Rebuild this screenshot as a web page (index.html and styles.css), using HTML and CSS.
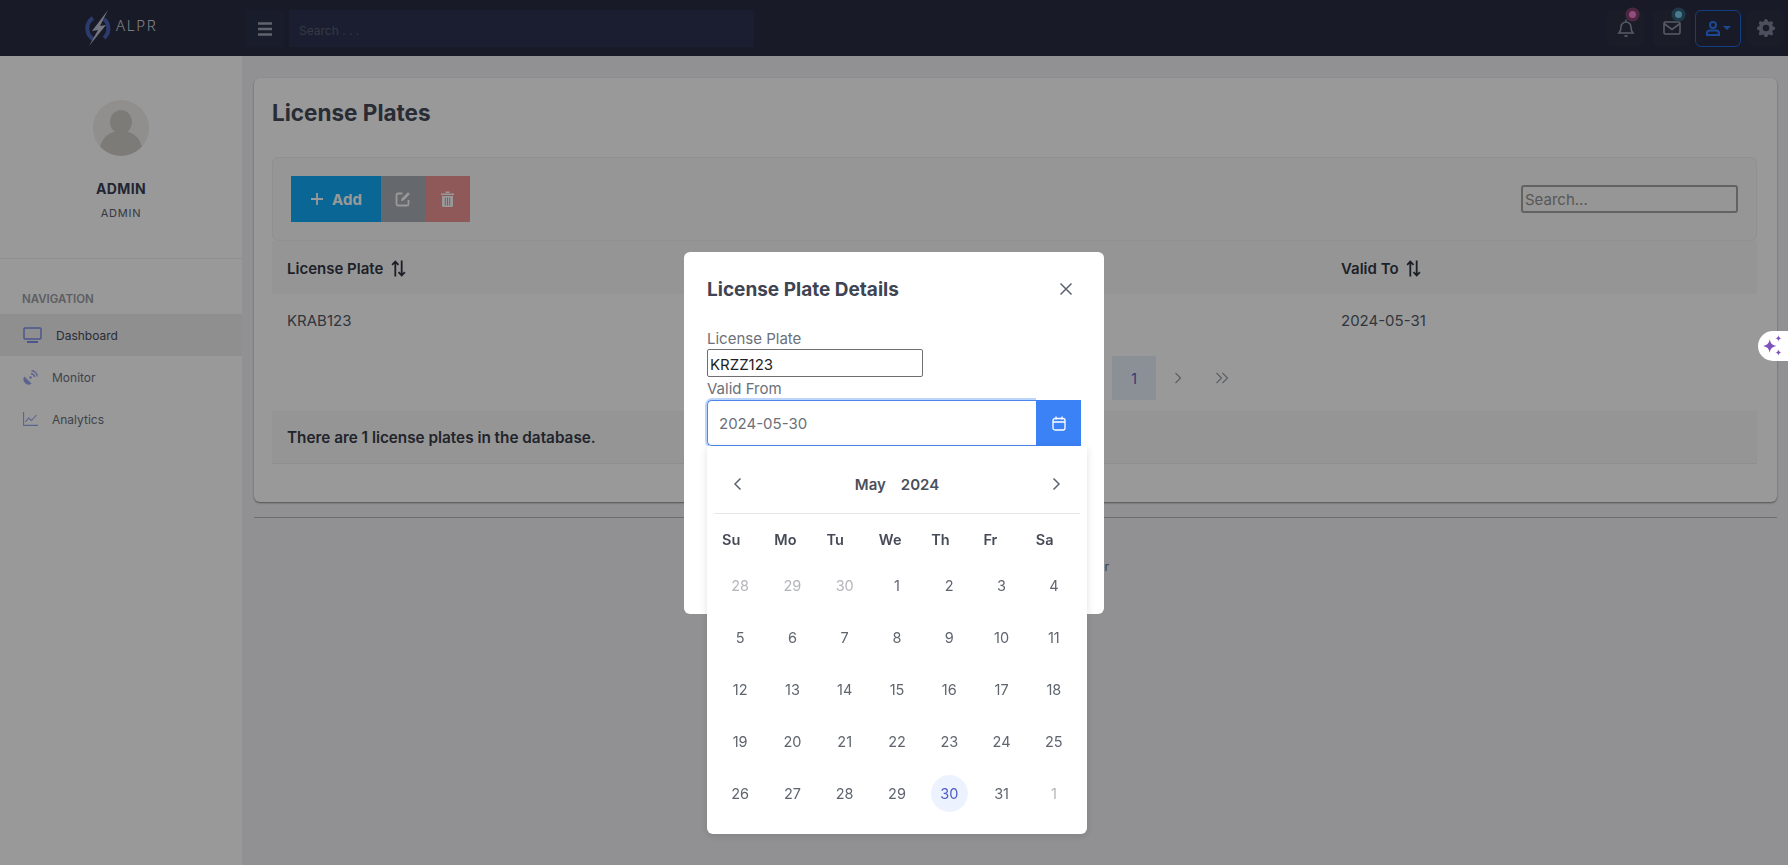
FILE: index.html
```html
<!DOCTYPE html>
<html lang="en">
<head>
  <meta charset="UTF-8">
  <title>License Plates</title>
  <link rel="stylesheet" href="styles.css">
</head>
<body>
  <header class="topbar">
    <div class="brand">
      <svg class="brand-logo" width="28" height="36" viewBox="0 0 28 36">
        <path d="M8 8 A12.5 12.5 0 0 0 8 29" fill="none" stroke="#4a62b8" stroke-width="4"/>
        <path d="M19 9 A12.5 12.5 0 0 1 19 28" fill="none" stroke="#4a62b8" stroke-width="4"/>
        <path d="M23 0 L7 21 L13 20 L4 36 L21 15 L15 16 Z" fill="#c0c4d6"/>
      </svg>
      <span class="brand-name">ALPR</span>
    </div>
    <button class="menu-btn">
      <svg width="16" height="14" viewBox="0 0 16 14"><path d="M1 1.500h14M1 7h14M1 12.500h14" stroke="#a0a5b4" stroke-width="2.400"/></svg>
    </button>
    <div class="top-search">Search . . .</div>
    <div class="top-actions">
      <button class="top-btn bell-btn">
        <svg width="18" height="20" viewBox="0 0 18 20" fill="none" stroke="#9498a8" stroke-width="1.500"><path d="M2 15c1.500-1.500 2-3 2-6a5 5 0 0 1 10 0c0 3 .5 4.500 2 6z"/><path d="M7.500 18h3" stroke-width="1.800"/><path d="M9 1.500v2"/></svg>
        <span class="dot dot-pink"></span>
      </button>
      <button class="top-btn mail-btn">
        <svg width="18" height="14" viewBox="0 0 18 14" fill="none" stroke="#9498a8" stroke-width="1.600"><rect x="1" y="1" width="16" height="12" rx="1.500"/><path d="M1 2.500l8 6 8-6"/></svg>
        <span class="dot dot-teal"></span>
      </button>
      <button class="user-btn">
        <svg width="14" height="15" viewBox="0 0 14 15" fill="none" stroke="#2f7bf5" stroke-width="2"><circle cx="7" cy="4" r="3"/><path d="M1 14v-1.500c0-2 1.500-3 3-3h6c1.500 0 3 1 3 3V14z"/></svg>
        <span class="caret"></span>
      </button>
      <button class="top-btn gear-btn">
        <svg width="18" height="18" viewBox="0 0 16 16" fill="#80859a"><path d="M9.400 1.100c-.4-1.500-2.500-1.500-2.900 0l-.1.300a1.500 1.500 0 0 1-2.200.9l-.3-.1c-1.300-.8-2.800.7-2 2l.1.300a1.500 1.500 0 0 1-.9 2.200l-.3.100c-1.500.4-1.500 2.500 0 2.900l.3.100a1.500 1.500 0 0 1 .9 2.200l-.1.300c-.8 1.300.7 2.800 2 2l.3-.1a1.500 1.500 0 0 1 2.200.9l.1.300c.4 1.500 2.500 1.500 2.900 0l.1-.3a1.500 1.500 0 0 1 2.200-.9l.3.1c1.300.8 2.800-.7 2-2l-.1-.3a1.500 1.500 0 0 1 .9-2.200l.3-.1c1.500-.4 1.500-2.500 0-2.900l-.3-.1a1.500 1.500 0 0 1-.9-2.200l.1-.3c.8-1.300-.7-2.800-2-2l-.3.1a1.500 1.500 0 0 1-2.200-.9zM8 10.900a2.900 2.900 0 1 1 0-5.800 2.900 2.900 0 0 1 0 5.800z"/></svg>
      </button>
    </div>
  </header>

  <div class="layout">
    <aside class="sidebar">
      <div class="profile">
        <div class="avatar">
          <svg width="56" height="56" viewBox="0 0 56 56"><ellipse cx="28" cy="22" rx="11" ry="12" fill="#cfcec9"/><path d="M6 56c0-16 8-25 22-25s22 9 22 25z" fill="#cfcec9"/></svg>
        </div>
        <div class="profile-name">ADMIN</div>
        <div class="profile-role">ADMIN</div>
      </div>
      <div class="nav-title">NAVIGATION</div>
      <a class="nav-item active">
        <svg width="19" height="16" viewBox="0 0 19 16" fill="none" stroke="#7f8fe8" stroke-width="1.500"><rect x="1" y="1" width="17" height="11" rx="1"/><path d="M4 15h11" stroke-width="2"/></svg>
        <span>Dashboard</span>
      </a>
      <a class="nav-item">
        <svg width="15" height="15" viewBox="0 0 15 15" fill="#9aa6ec"><path d="M1.500 6.500l7 7a5 5 0 0 1-7-7z"/><circle cx="7.500" cy="7.500" r="1.300"/><path d="M8 3.500a4 4 0 0 1 3.500 3.500" fill="none" stroke="#9aa6ec" stroke-width="1.500"/><path d="M8.500 .8a6 6 0 0 1 5.700 5.700" fill="none" stroke="#9aa6ec" stroke-width="1.500"/></svg>
        <span>Monitor</span>
      </a>
      <a class="nav-item">
        <svg width="15" height="14" viewBox="0 0 15 14" fill="none" stroke="#9aa6ec" stroke-width="1.100"><path d="M.6 0v13.400H15"/><path d="M2.500 10l3-4 3 2.500L13.500 3"/></svg>
        <span>Analytics</span>
      </a>
    </aside>

    <main class="content">
      <section class="card">
        <h1 class="page-title">License Plates</h1>
        <div class="toolbar">
          <div class="btn-group">
            <button class="btn btn-add">
              <svg width="14" height="14" viewBox="0 0 14 14"><path d="M7 1v12M1 7h12" stroke="#fff" stroke-width="1.800"/></svg>
              Add
            </button>
            <button class="btn btn-edit">
              <svg width="16" height="16" viewBox="0 0 16 16" fill="none" stroke="#fff" stroke-width="1.800"><path d="M13.500 9v4a1.500 1.500 0 0 1-1.500 1.500H3A1.500 1.500 0 0 1 1.500 13V4A1.500 1.500 0 0 1 3 2.500h4.500"/><path d="M6 10l.6-2.600L13 1.200l1.900 1.900L8.600 9.400z" fill="#fff" stroke="none"/></svg>
            </button>
            <button class="btn btn-delete">
              <svg width="13" height="16" viewBox="0 0 13 16" fill="#fff"><path d="M0 2.500h13v1.500H0zM4.500 .5h4v1.500h-4z"/><path d="M1 5h11v9.500A1.500 1.500 0 0 1 10.500 16h-8A1.500 1.500 0 0 1 1 14.500zM3.800 6.500v8h1v-8zM6 6.500v8h1v-8zM8.200 6.500v8h1v-8z" fill-rule="evenodd"/></svg>
            </button>
          </div>
          <input class="table-search" type="text" placeholder="Search...">
        </div>
        <div class="table-row table-head">
          <div>License Plate <svg class="sort" width="15" height="17" viewBox="0 0 14 16"><path d="M4 15.500V1.500M1 4.500l3-3 3 3M10 .5v14M7 11.500l3 3 3-3" fill="none" stroke="#2f3340" stroke-width="1.700"/></svg></div>
          <div>Valid From</div>
          <div>Valid To <svg class="sort" width="15" height="17" viewBox="0 0 14 16"><path d="M4 15.500V1.500M1 4.500l3-3 3 3M10 .5v14M7 11.500l3 3 3-3" fill="none" stroke="#2f3340" stroke-width="1.700"/></svg></div>
        </div>
        <div class="table-row table-body">
          <div>KRAB123</div>
          <div>2024-05-30</div>
          <div>2024-05-31</div>
        </div>
        <div class="pager">
          <span class="page-link current">1</span>
          <span class="page-link">
            <svg width="8" height="12" viewBox="0 0 8 12" fill="none" stroke="#9a9fa8" stroke-width="1.200"><path d="M1.500 1l5 5-5 5"/></svg>
          </span>
          <span class="page-link">
            <svg width="14" height="12" viewBox="0 0 14 12" fill="none" stroke="#9a9fa8" stroke-width="1.200"><path d="M1.500 1l5 5-5 5M7.500 1l5 5-5 5"/></svg>
          </span>
        </div>
        <div class="table-foot">There are 1 license plates in the database.</div>
      </section>
      <footer class="page-footer">Automatic License Plate Reader</footer>
    </main>
  </div>

  <div class="backdrop">
    <div class="modal">
      <div class="modal-head">
        <h2>License Plate Details</h2>
        <svg width="14" height="14" viewBox="0 0 14 14"><path d="M1.500 1.500l11 11M12.500 1.500l-11 11" stroke="#5c6270" stroke-width="1.500"/></svg>
      </div>
      <label class="field-label">License Plate</label>
      <input class="plain-input" type="text" value="KRZZ123">
      <label class="field-label">Valid From</label>
      <div class="date-field">
        <input class="date-input" type="text" value="2024-05-30">
        <button class="date-btn">
          <svg width="14" height="15" viewBox="0 0 14 15" fill="none" stroke="#fff" stroke-width="1.300"><rect x="1" y="2.500" width="12" height="11.500" rx="2"/><path d="M1 6h12M4 .5v3M10 .5v3"/></svg>
        </button>
        <div class="calendar">
          <div class="cal-head">
            <svg width="9" height="14" viewBox="0 0 9 14" fill="none" stroke="#5c6270" stroke-width="1.500"><path d="M7.500 1.500L2 7l5.500 5.500"/></svg>
            <div class="cal-title"><span>May</span><span>2024</span></div>
            <svg width="9" height="14" viewBox="0 0 9 14" fill="none" stroke="#5c6270" stroke-width="1.500"><path d="M1.500 1.500L7 7l-5.500 5.500"/></svg>
          </div>
          <div class="cal-grid">
            <div class="wd">Su</div><div class="wd">Mo</div><div class="wd">Tu</div><div class="wd">We</div><div class="wd">Th</div><div class="wd">Fr</div><div class="wd">Sa</div>
            <div class="day muted">28</div><div class="day muted">29</div><div class="day muted">30</div><div class="day">1</div><div class="day">2</div><div class="day">3</div><div class="day">4</div>
            <div class="day">5</div><div class="day">6</div><div class="day">7</div><div class="day">8</div><div class="day">9</div><div class="day">10</div><div class="day">11</div>
            <div class="day">12</div><div class="day">13</div><div class="day">14</div><div class="day">15</div><div class="day">16</div><div class="day">17</div><div class="day">18</div>
            <div class="day">19</div><div class="day">20</div><div class="day">21</div><div class="day">22</div><div class="day">23</div><div class="day">24</div><div class="day">25</div>
            <div class="day">26</div><div class="day">27</div><div class="day">28</div><div class="day">29</div><div class="day"><span class="selected">30</span></div><div class="day">31</div><div class="day muted">1</div>
          </div>
        </div>
      </div>
    </div>
  </div>

  <button class="spark">
    <svg width="24" height="24" viewBox="0 0 22 22" fill="#7d52bd"><path d="M8 4.500c.6 4 2 5.400 6 6.500-4 1.100-5.400 2.500-6 6.500-.6-4-2-5.400-6-6.500 4-1.100 5.400-2.500 6-6.500z"/><path d="M16 1c.3 2 1 2.700 3 3-2 .3-2.700 1-3 3-.3-2-1-2.700-3-3 2-.3 2.700-1 3-3zM16 14c.3 2 1 2.700 3 3-2 .3-2.700 1-3 3-.3-2-1-2.700-3-3 2-.3 2.700-1 3-3z"/></svg>
  </button>
</body>
</html>
```

FILE: styles.css
```css
* {
  box-sizing: border-box;
}
html, body {
  height: 100%;
  overflow: hidden;
}
body {
  margin: 0;
  font-family: 'Inter', sans-serif;
  background-color: #f2f2f7;
  color: #3e4452;
  display: flex;
  flex-direction: column;
}
button {
  border: none;
  padding: 0;
  font-family: inherit;
}

/* top bar */
.topbar {
  height: 56px;
  flex: none;
  background-color: #282d41;
  display: flex;
  align-items: center;
  padding: 0 4px 0 0;
}
.brand {
  width: 246px;
  padding-left: 85px;
  display: flex;
  align-items: center;
  gap: 3px;
  margin-top: -1px;
}
.brand-name {
  font-family: 'Open Sans', sans-serif;
  font-size: 15px;
  font-weight: 300;
  letter-spacing: 1.800px;
  color: #eceef4;
  margin-top: -5px;
}
.menu-btn {
  width: 38px;
  height: 37px;
  padding-top: 2px;
  background-color: #2b3049;
  display: flex;
  align-items: center;
  justify-content: center;
}
.top-search {
  width: 465px;
  height: 37px;
  margin-left: 5px;
  padding-left: 10px;
  background-color: #2d3250;
  color: #5a6074;
  font-size: 12px;
  line-height: 41px;
}
.top-actions {
  margin-left: auto;
  display: flex;
  align-items: center;
}
.top-btn {
  position: relative;
  width: 37px;
  height: 37px;
  background-color: #2c3044;
  border-radius: 5px;
  display: flex;
  align-items: center;
  justify-content: center;
}
.mail-btn {
  margin: 0 5px 0 9px;
}
.gear-btn {
  margin-left: 6px;
}
.dot {
  position: absolute;
  top: 1px;
  right: 8px;
  width: 7px;
  height: 7px;
  border-radius: 50%;
}
.dot-pink {
  background-color: #f082cf;
  box-shadow: 0 0 0 3.500px #84406f;
}
.dot-teal {
  background-color: #7ccdee;
  box-shadow: 0 0 0 3.500px #325f77;
}
.user-btn {
  width: 46px;
  height: 37px;
  background-color: #282d41;
  border: 1.500px solid #2068d8;
  border-radius: 6px;
  display: flex;
  align-items: center;
  justify-content: center;
  gap: 3px;
}
.caret {
  width: 0;
  height: 0;
  border-left: 4px solid transparent;
  border-right: 4px solid transparent;
  border-top: 4px solid #2f7bf5;
}

/* layout */
.layout {
  flex: 1;
  display: flex;
  min-height: 0;
}
.sidebar {
  width: 242px;
  flex: none;
  background-color: #fff;
}
.profile {
  height: 203px;
  padding-top: 44px;
  border-bottom: 1px solid #f0f0f0;
  text-align: center;
}
.avatar {
  width: 56px;
  height: 56px;
  margin: 0 auto;
  border-radius: 50%;
  background-color: #f0efeb;
  overflow: hidden;
}
.profile-name {
  margin-top: 24px;
  font-size: 14px;
  font-weight: 700;
  letter-spacing: .4px;
  color: #3a3f54;
}
.profile-role {
  margin-top: 9px;
  font-size: 11px;
  letter-spacing: .8px;
  color: #5a6070;
}
.nav-title {
  margin: 33px 0 8px 22px;
  font-size: 11.500px;
  font-weight: 600;
  color: #9a9ea6;
}
.nav-item {
  height: 42px;
  padding-left: 23px;
  display: flex;
  align-items: center;
  gap: 14px;
  font-size: 12px;
  color: #6a6f7c;
}
.nav-item.active {
  background-color: #eeeef1;
  color: #464b59;
}

/* main card */
.content {
  flex: 1;
  min-width: 0;
  padding: 22px 11px 0 12px;
}
.card {
  height: 424px;
  padding: 0 20px 0 18px;
  background-color: #fff;
  border-radius: 6px;
  box-shadow: 0 1px 2px rgba(0,0,0,0.45);
}
.page-title {
  margin: 0;
  height: 79px;
  padding-top: 20px;
  font-size: 22.500px;
  font-weight: 700;
  line-height: 30px;
  color: #454a58;
}
.toolbar {
  height: 84px;
  padding: 0 18px;
  border: 1px solid #f0f0f0;
  border-radius: 6px;
  background-color: #fbfbfb;
  display: flex;
  align-items: center;
  justify-content: space-between;
}
.btn-group {
  display: flex;
}
.btn {
  height: 46px;
  width: 44.500px;
  display: flex;
  align-items: center;
  justify-content: center;
  color: #fff;
}
.btn-add {
  width: 90px;
  gap: 8px;
  background-color: #11aaf8;
  font-size: 15px;
  font-weight: 700;
}
.btn-edit {
  background-color: #a8adb6;
}
.btn-delete {
  background-color: #ee9596;
}
.table-search {
  width: 217px;
  height: 28px;
  padding: 1px 2px;
  border: 2px solid #a4a4a4;
  border-radius: 3px;
  background-color: #fbfbfb;
  font-family: inherit;
  font-size: 15px;
}
.table-search::placeholder {
  color: #929292;
}
.table-row {
  display: grid;
  grid-template-columns: 527px 527px 1fr;
  padding-left: 15px;
  align-items: center;
  font-size: 15px;
}
.table-head {
  height: 53px;
  padding-top: 2px;
  background-color: #f8f8f8;
  font-weight: 600;
  color: #333845;
}
.sort {
  margin-left: 4px;
  vertical-align: -3px;
}
.table-body {
  height: 53px;
  color: #545a66;
}
.pager {
  height: 64px;
  padding: 9px 513px 0 0;
  display: flex;
  justify-content: flex-end;
}
.page-link {
  width: 44px;
  height: 44px;
  display: flex;
  align-items: center;
  justify-content: center;
  font-size: 14px;
  color: #7c828e;
}
.page-link.current {
  background-color: #e8eefb;
  color: #4f63c8;
}
.table-foot {
  height: 53px;
  padding-left: 15px;
  display: flex;
  align-items: center;
  background-color: #f8f8f8;
  border-bottom: 1px solid #eeeeee;
  font-size: 15.300px;
  font-weight: 600;
  color: #373c49;
}
.page-footer {
  margin-top: 15px;
  padding-top: 41px;
  border-top: 1px solid #b8b8bc;
  text-align: center;
  font-size: 12.500px;
  color: #6b6f78;
}

/* modal */
.backdrop {
  position: fixed;
  top: 0;
  left: 0;
  right: 0;
  bottom: 0;
  padding-top: 252px;
  background-color: rgba(0,0,0,0.4);
  display: flex;
  justify-content: center;
  align-items: flex-start;
}
.modal {
  width: 420px;
  height: 362px;
  padding: 0 23px;
  background-color: #fff;
  border-radius: 6px;
}
.modal-head {
  height: 76px;
  padding: 0 8px 2px 0;
  display: flex;
  align-items: center;
  justify-content: space-between;
}
.modal-head h2 {
  margin: 0;
  font-size: 19px;
  font-weight: 700;
  color: #3e4452;
}
.field-label {
  display: block;
  font-size: 15px;
  line-height: 21px;
  color: #6b7079;
}
.plain-input {
  display: block;
  width: 216px;
  height: 28px;
  padding: 2px 2px 0;
  border: 1px solid #6f6f6f;
  border-radius: 2px;
  font-family: inherit;
  font-size: 15px;
  color: #1d1f24;
}
.plain-input + .field-label {
  margin-top: 1px;
}
.date-field {
  position: relative;
  display: flex;
  margin-top: 1px;
}
.date-input {
  width: 329px;
  height: 46px;
  padding-left: 11px;
  border: 1px solid #4f86ee;
  border-right: none;
  border-radius: 5px 0 0 5px;
  box-shadow: 0 0 0 2px #bcd6fb;
  clip-path: inset(-3px 0 -3px -3px);
  font-family: inherit;
  font-size: 15px;
  color: #6b7079;
  outline: none;
}
.date-btn {
  width: 45px;
  height: 46px;
  background-color: #3b82f6;
  display: flex;
  align-items: center;
  justify-content: center;
}
.calendar {
  position: absolute;
  top: 46px;
  left: 0;
  width: 380px;
  height: 388px;
  padding: 0 7px;
  background-color: #fff;
  border-radius: 0 0 6px 6px;
  box-shadow: 0 2px 8px rgba(0,0,0,0.12);
}
.cal-head {
  height: 68px;
  padding: 9px 19px 0;
  border-bottom: 1px solid #e6e7ea;
  display: flex;
  align-items: center;
  justify-content: space-between;
}
.cal-title {
  display: flex;
  gap: 15px;
  font-size: 15px;
  font-weight: 600;
  color: #4a4f5b;
}
.cal-grid {
  display: grid;
  grid-template-columns: repeat(7, 1fr);
  grid-template-rows: 45px repeat(5, 52px);
}
.wd {
  padding: 17px 0 0 8px;
  font-size: 14.500px;
  font-weight: 600;
  color: #454a56;
}
.day {
  display: flex;
  align-items: center;
  justify-content: center;
  font-size: 14.500px;
  color: #5f646e;
}
.day.muted {
  color: #b3b5ba;
}
.selected {
  width: 37px;
  height: 37px;
  border-radius: 50%;
  background-color: #edf3fe;
  color: #4a5cc5;
  display: flex;
  align-items: center;
  justify-content: center;
}

/* floating helper tab */
.spark {
  position: fixed;
  top: 331px;
  right: 0;
  width: 30px;
  height: 30px;
  padding-left: 3px;
  background-color: #fff;
  border-radius: 15px 0 0 15px;
  display: flex;
  align-items: center;
}
```
